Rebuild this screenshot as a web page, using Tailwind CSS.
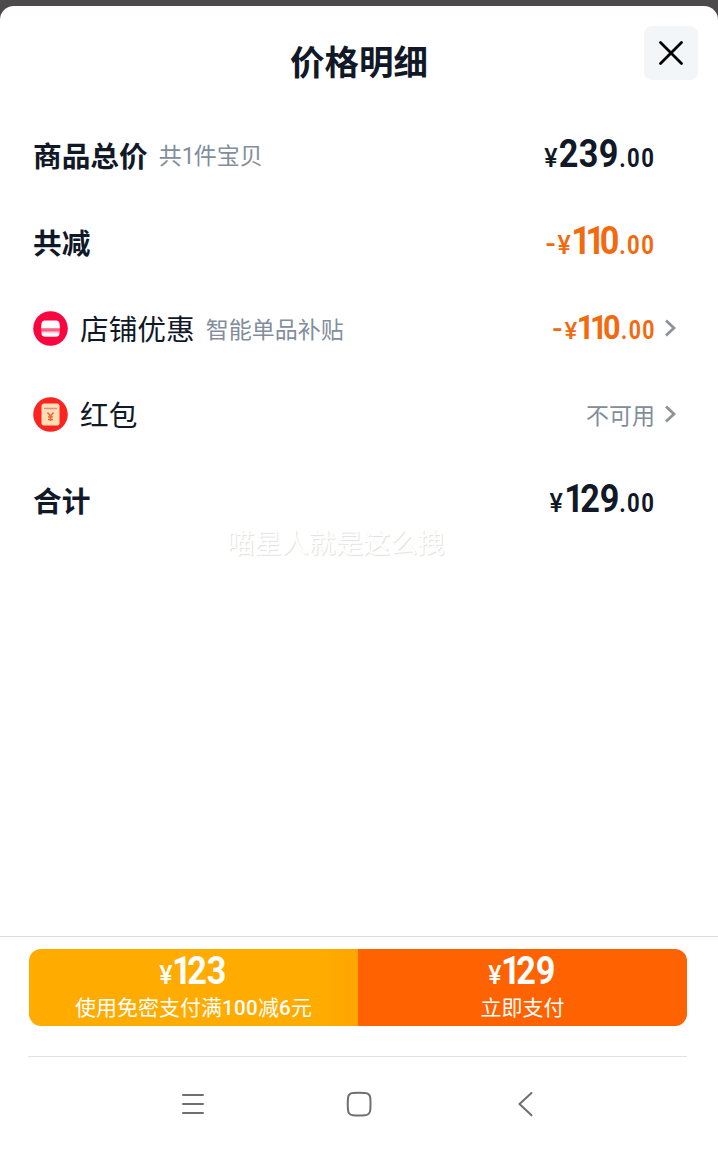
<!DOCTYPE html>
<html lang="zh-CN">
<head>
    <meta charset="UTF-8">
    <meta name="viewport" content="width=device-width, initial-scale=1.0">
    <title>价格明细</title>
    <script src="https://cdn.jsdelivr.net/npm/@tailwindcss/browser@4"></script>
</head>
<body class="bg-[#4c4a4b] pt-[6px] h-[1152px] overflow-hidden font-['Noto_Sans_CJK_SC',sans-serif] text-[#111827]">
    <div class="bg-white rounded-t-[14px] h-[1146px] flex flex-col">
        <!-- Header -->
        <header class="h-[107px] shrink-0 grid grid-cols-[74px_1fr_54px] pr-5 pt-5">
            <span></span>
            <h1 class="text-center text-[34.5px] leading-[68px] font-bold">价格明细</h1>
            <button class="size-[54px] rounded-lg bg-[#f3f6f9] flex items-center justify-center" aria-label="关闭">
                <svg class="size-[54px]" viewBox="0 0 54 54" fill="none" stroke="#000" stroke-width="2.8" stroke-linecap="round">
                    <path d="M16.500 16.500L37.500 37.500M37.500 16.500L16.500 37.500"/>
                </svg>
            </button>
        </header>

        <!-- Price rows -->
        <main class="flex-1 pl-[33px] pr-[39px]">
            <div class="h-[86px] flex items-center pr-6 pb-[2px]">
                <span class="text-[28.7px] font-bold">商品总价</span>
                <span class="ml-[11px] pt-[2px] text-[23px] text-[#838d9c]">共<span class="font-[Roboto] tracking-[-1px]">1</span>件宝贝</span>
                <span class="ml-auto pb-[2px] font-[Roboto] font-medium whitespace-nowrap"><span class="text-[25px]">¥</span><span class="inline-block origin-right scale-x-90 -ml-[5px] text-[38px] font-bold tracking-[0.5px]">239</span><span class="inline-block origin-right scale-x-85 -ml-[6px] -mr-[0.5px] text-[26px] font-bold tracking-[1.6px]">.00</span></span>
            </div>
            <div class="h-[86px] flex items-center pr-6">
                <span class="text-[28.7px] font-bold">共减</span>
                <span class="ml-auto pb-[2px] font-[Roboto] font-medium whitespace-nowrap text-[#f26a10]"><span class="text-[30px] mr-[2px]">-</span><span class="text-[25px]">¥</span><span class="inline-block origin-right scale-x-90 -ml-[5px] text-[38px] font-bold"><span class="tracking-[-6px]">11</span>0</span><span class="inline-block origin-right scale-x-85 -ml-[6px] -mr-[0.5px] text-[26px] font-bold tracking-[1.6px]">.00</span></span>
            </div>
            <div class="h-[86px] flex items-center">
                <svg class="size-[35px]" viewBox="0 0 35 35">
                    <circle cx="17.500" cy="17.500" r="17.300" fill="#fb0540"/>
                    <path d="M12 9.500h11q3 0 3.500 3l.5 5H8l.5-5Q9 9.500 12 9.500z" fill="#fff"/>
                    <path d="M8.500 18.500h18v4q0 3-3 3h-12q-3 0-3-3z" fill="#ffd3dc"/>
                    <path d="M9 22.500h17q0 3-3 3H12q-3 0-3-3z" fill="#fff"/>
                    <path d="M8 19.500h19" stroke="#fd5f80" stroke-width="2"/>
                </svg>
                <span class="ml-3 text-[28.7px]">店铺优惠</span>
                <span class="ml-[11px] text-[23px] text-[#838d9c]">智能单品补贴</span>
                <span class="ml-auto pb-[2px] font-[Roboto] font-medium whitespace-nowrap text-[#f26a10]"><span class="text-[30px] mr-[2px]">-</span><span class="text-[24px]">¥</span><span class="inline-block origin-right scale-x-90 -ml-[5px] text-[34px] font-bold"><span class="tracking-[-5px]">11</span>0</span><span class="inline-block origin-right scale-x-85 -ml-[6px] -mr-[0.5px] text-[25px] font-bold tracking-[1.6px]">.00</span></span>
                <svg class="w-6 h-6" viewBox="0 0 24 24" fill="none" stroke="#8f9298" stroke-width="2.800">
                    <path d="M11 4.500L19 12L11 19.500"/>
                </svg>
            </div>
            <div class="h-[86px] flex items-center">
                <svg class="size-[35px]" viewBox="0 0 35 35">
                    <circle cx="17.500" cy="17.500" r="17.300" fill="#fb2420"/>
                    <rect x="8.500" y="6.500" width="18" height="22" rx="2.500" fill="#ffe0b5"/>
                    <path d="M11 11.500h13" stroke="#e88a86" stroke-width="1.500"/>
                    <path d="M14.500 15.500l3 3.500 3-3.500M17.500 19v5M15 20h5M15 22.500h5" fill="none" stroke="#f0643d" stroke-width="1.500"/>
                </svg>
                <span class="ml-3 -mt-[1px] text-[28.7px]">红包</span>
                <span class="ml-auto text-[23px] text-[#838d98]">不可用</span>
                <svg class="w-6 h-6" viewBox="0 0 24 24" fill="none" stroke="#8f9298" stroke-width="2.800">
                    <path d="M11 4.500L19 12L11 19.500"/>
                </svg>
            </div>
            <div class="h-[86px] flex items-center pr-6">
                <span class="text-[28.7px] font-bold">合计</span>
                <span class="ml-auto pb-[2px] font-[Roboto] font-medium whitespace-nowrap"><span class="text-[25px]">¥</span><span class="inline-block origin-right scale-x-90 -ml-[5px] text-[38px] font-bold"><span class="tracking-[-4px]">1</span>29</span><span class="inline-block origin-right scale-x-85 -ml-[6px] -mr-[0.5px] text-[26px] font-bold tracking-[1.6px]">.00</span></span>
            </div>
            <p class="-mt-[22px] ml-[194px] text-[27.2px] leading-[40px] text-white [text-shadow:1px_1px_1px_#e0e0e0]">喵星人就是这么拽</p>
        </main>

        <!-- Payment buttons -->
        <footer class="h-[216px] shrink-0 border-t border-[#dcdcdc] pt-[12px] pl-[28px] pr-[31px]">
            <div class="h-[77px] ml-px grid grid-cols-2 rounded-xl overflow-hidden text-white text-center">
                <button class="bg-[linear-gradient(90deg,#ffab00_90%,#ffa500)] flex flex-col items-center">
                    <span class="font-[Roboto] font-medium h-[43px] leading-[45px]"><span class="text-[25px]">¥</span><span class="inline-block origin-right scale-x-90 -ml-[6px] mr-px text-[38px] font-bold"><span class="tracking-[-5px]">1</span>23</span></span>
                    <span class="text-[21px] leading-[28px] h-[31px]">使用免密支付满<span class="font-[Roboto] font-medium text-[20.5px] tracking-[0.3px]">100</span>减<span class="font-[Roboto] font-medium text-[20.5px] tracking-[0.3px]">6</span>元</span>
                </button>
                <button class="bg-[#ff6200] flex flex-col items-center">
                    <span class="font-[Roboto] font-medium h-[43px] leading-[45px]"><span class="text-[25px]">¥</span><span class="inline-block origin-right scale-x-90 -ml-[6px] mr-px text-[38px] font-bold"><span class="tracking-[-5px]">1</span>29</span></span>
                    <span class="text-[21px] leading-[28px] h-[31px]">立即支付</span>
                </button>
            </div>
            <!-- System navigation -->
            <nav class="mt-[30px] border-t border-[#e2e2e2] h-[94px] flex items-center justify-center gap-[134px] pl-[2px]">
                <svg class="size-8" viewBox="0 0 32 32" fill="none" stroke="#6f6f6f" stroke-width="2" stroke-linecap="round">
                    <path d="M6 7h20M6 16h20M6 25h20"/>
                </svg>
                <svg class="size-8" viewBox="0 0 32 32" fill="none" stroke="#6f6f6f" stroke-width="2">
                    <path d="M10 5Q16 4.400 22 5Q27 5.300 27.300 10Q27.800 16 27.300 22Q27 26.800 22 27.200Q16 27.800 10 27.200Q5.300 26.800 5 22Q4.400 16 5 10Q5.300 5.300 10 5z"/>
                </svg>
                <svg class="size-8" viewBox="0 0 32 32" fill="none" stroke="#6f6f6f" stroke-width="2" stroke-linecap="round">
                    <path d="M22.500 5L10.500 16L22.500 27.300"/>
                </svg>
            </nav>
        </footer>
    </div>
</body>
</html>
